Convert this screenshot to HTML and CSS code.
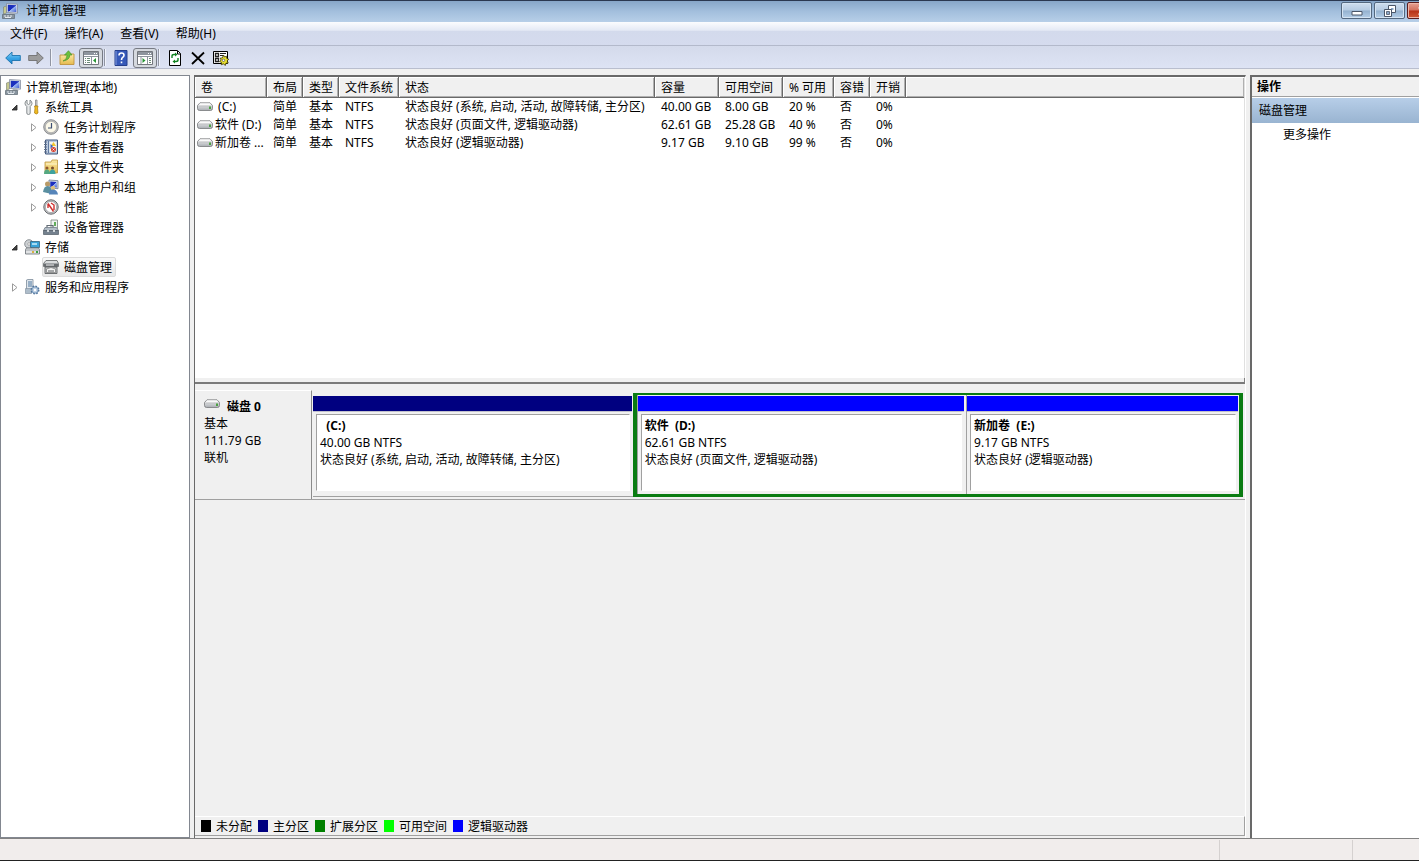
FILE: index.html
```html
<!DOCTYPE html>
<html lang="zh-CN">
<head>
<meta charset="utf-8">
<title>计算机管理</title>
<link rel="stylesheet" href="styles.css">
</head>
<body>
<svg class="defs" aria-hidden="true">
  <defs>
    <linearGradient id="g-blue" x1="0" y1="0" x2="1" y2="1"><stop offset="0" stop-color="#1a2fb8"/><stop offset=".5" stop-color="#1c2fc0"/><stop offset=".55" stop-color="#9db8f2"/><stop offset="1" stop-color="#3a55d0"/></linearGradient>
    <linearGradient id="g-arrow" x1="0" y1="0" x2="0" y2="1"><stop offset="0" stop-color="#8fd4f8"/><stop offset=".5" stop-color="#3aa5e6"/><stop offset="1" stop-color="#1f86cf"/></linearGradient>
    <linearGradient id="g-grey" x1="0" y1="0" x2="0" y2="1"><stop offset="0" stop-color="#f8f8f8"/><stop offset="1" stop-color="#a9adb2"/></linearGradient>
    <linearGradient id="g-folder" x1="0" y1="0" x2="0" y2="1"><stop offset="0" stop-color="#fbe9a4"/><stop offset="1" stop-color="#e5bb50"/></linearGradient>
    <symbol id="i-computer" viewBox="0 0 16 16">
      <path d="M1.500 4l3-1v7l-3 1z" fill="#c6c98f" stroke="#777c70" stroke-width=".6"/>
      <path d="M4.500.500l11 .700v9l-11-.800z" fill="#d8dde6" stroke="#7b8496" stroke-width=".7"/>
      <path d="M5.800 1.800l8.500.5v6.700l-8.500-.6z" fill="url(#g-blue)"/>
      <path d="M8 10h4l2 1.500H7z" fill="#aeb4bd"/>
      <path d="M.500 11.500h12v4H.500z" fill="#87939e" stroke="#5d6871" stroke-width=".7"/>
      <path d="M2 13h2M5 13h2M8 13h2M3 14.500h6" stroke="#e6ecf0"/>
    </symbol>
    <symbol id="i-tools" viewBox="0 0 16 16">
      <path d="M3 1v3.500l1.500 1L6 4.500V1q2 1 2 3.500Q8 6 6.200 7.500V14q0 1.500-1.700 1.500T2.800 14V7.500Q1 6 1 4.500 1 2 3 1z" fill="#e7e9ea" stroke="#7c8185" stroke-width=".9"/>
      <path d="M11.500 1h1.500v6h-1.500z" fill="#ddd" stroke="#777" stroke-width=".7"/>
      <path d="M10.500 7h3.500l-.5 2 .5 5q-1.700 2-3.500 0l.5-5z" fill="#f0bb22" stroke="#a97909" stroke-width=".7"/>
    </symbol>
    <symbol id="i-clock" viewBox="0 0 16 16">
      <circle cx="8" cy="8" r="7.300" fill="#bfc1c2" stroke="#77797b" stroke-width=".8"/>
      <circle cx="8" cy="8" r="5.700" fill="#fbf8e9" stroke="#999" stroke-width=".6"/>
      <path d="M8.500 4V9H5" fill="none" stroke="#3c4f73" stroke-width="1.200"/>
    </symbol>
    <symbol id="i-event" viewBox="0 0 16 16">
      <path d="M2.500 1h12v14h-12z" fill="#bac9df" stroke="#41587f"/>
      <path d="M5.500 2v12" stroke="#5f789f"/>
      <path d="M1 3h3M1 5.500h3M1 8h3M1 10.500h3M1 13h3" stroke="#61718a"/>
      <path d="M6.500 3h7v10h-7z" fill="#f4f4ec"/>
      <path d="M10.500 3l2.500 4H8z" fill="#f4c52d"/><path d="M7.500 5l2.500 2-2.500 3z" fill="#345fc1"/><circle cx="10.500" cy="10.500" r="2.500" fill="#d43c2e"/><path d="M9.500 9.500l2 2M11.500 9.500l-2 2" stroke="#fff" stroke-width=".8"/>
    </symbol>
    <symbol id="i-share" viewBox="0 0 16 16">
      <path d="M2 3h6l1-2h5.500v13H2z" fill="url(#g-folder)" stroke="#bd9540" stroke-width=".8"/>
      <path d="M3 5h11" stroke="#fff6ce"/>
      <circle cx="4" cy="9" r="1.500" fill="#8f5930"/><path d="M1 15q0-4.500 3-4.500T7 15z" fill="#55a981"/>
      <circle cx="9.500" cy="9" r="1.500" fill="#754a2b"/><path d="M6.500 15q0-4.500 3-4.500t3 4.500z" fill="#3fa29e"/>
    </symbol>
    <symbol id="i-users" viewBox="0 0 16 16">
      <path d="M6 1l9 .7v8L6 9z" fill="#d8dfe9" stroke="#6b7992" stroke-width=".8"/><path d="M7.300 2.500l6.500.5v5.500l-6.500-.5z" fill="url(#g-blue)"/>
      <circle cx="4.500" cy="5" r="2.500" fill="#b99a67"/><path d="M0 13q1-6 4.500-6t5 6l-3 1.500z" fill="#5a8fa0"/>
      <circle cx="10" cy="9" r="2.200" fill="#dec17e"/><path d="M6 15.500q0-5 4-5t5 5z" fill="#5685ba"/>
    </symbol>
    <symbol id="i-perf" viewBox="0 0 16 16">
      <circle cx="8" cy="8" r="7.200" fill="#c3c5c7" stroke="#66696d"/>
      <circle cx="8" cy="8" r="5.600" fill="#fff" stroke="#898b8f" stroke-width=".6"/>
      <path d="M5 4.500l5.500 8M5 9V5M11 11V6L8 4" fill="none" stroke="#cf302f" stroke-width="1.400"/>
    </symbol>
    <symbol id="i-device" viewBox="0 0 16 16">
      <path d="M8 1h6.500v8.500H8z" fill="#eef3f0" stroke="#78837e" stroke-width=".8"/><path d="M11 3h2v4h-2z" fill="#62ad5b"/>
      <path d="M4 8.500V6.500h6v2" fill="none" stroke="#626b74" stroke-width="1.200"/>
      <path d="M2 8.500h11.500l2 3H.500z" fill="#b3bdc7" stroke="#65717c" stroke-width=".7"/>
      <path d="M.500 11.500h15v4H.500z" fill="#74818e" stroke="#505c66" stroke-width=".7"/><path d="M4 11h2v2H4zM10 11h2v2h-2z" fill="#d3d9dd"/>
    </symbol>
    <symbol id="i-storage" viewBox="0 0 16 16">
      <circle cx="5" cy="5" r="4.300" fill="#cdd1d4" stroke="#767b80" stroke-width=".8"/><circle cx="5" cy="5" r="1.300" fill="#fff" stroke="#888" stroke-width=".6"/>
      <path d="M6.500 2.500h9v6h-9z" fill="#3aa2d7" stroke="#30627d" stroke-width=".8"/><path d="M8 4h5v2H8z" fill="#a8dcf2"/>
      <path d="M2.500 9h12l1 1.500V15h-14v-4.500z" fill="#e1e3e5" stroke="#666c72" stroke-width=".8"/><path d="M2 11h13" stroke="#9da2a6"/><path d="M12 12h2v2h-2z" fill="#39a241"/><path d="M8 12h2v2H8z" fill="#d8b244"/>
    </symbol>
    <symbol id="i-disks" viewBox="0 0 16 16">
      <path d="M3 1.500h11l1.500 3v3H.500v-3z" fill="#dadcdd" stroke="#5c5f61" stroke-width=".8"/>
      <path d="M1 4.500h14v3H1z" fill="#696d70"/><path d="M3 6h8" stroke="#f5f5f5"/>
      <path d="M2 8h12v6.500H2z" fill="#c2c5c6" stroke="#505457" stroke-width=".8"/>
      <path d="M3.500 10q4.500-3 9 0v3.500h-9z" fill="#f3f3f3" stroke="#777" stroke-width=".7"/><path d="M5 12h6" stroke="#5a5e60"/>
    </symbol>
    <symbol id="i-services" viewBox="0 0 16 16">
      <path d="M2.500 1l1.500-.500h5V12H2.500z" fill="#dfe6ed" stroke="#7c8b9a" stroke-width=".8"/><path d="M4 3h4M4 5h4M4 7h4" stroke="#51789f"/>
      <path d="M1.500 9.500h6v5h-6z" fill="#aebdca" stroke="#7c8b9a" stroke-width=".6"/>
      <circle cx="11" cy="11" r="3.700" fill="#9eb8d4" stroke="#54779e" stroke-width="1.600" stroke-dasharray="1.600 1.300"/><circle cx="11" cy="11" r="3" fill="#bdd0e3" stroke="#6d8eb3" stroke-width=".6"/><circle cx="11" cy="11" r="1.200" fill="#fff"/>
    </symbol>
    <symbol id="i-drive" viewBox="0 0 16 10">
      <path d="M3 .8h10l2.500 2.700v3q0 2-2 2h-11q-2 0-2-2v-3z" fill="url(#g-grey)" stroke="#77797b" stroke-width=".8"/>
      <path d="M3 1.500h10l1.500 2h-13z" fill="#fafafa"/><path d="M1.500 4h13" stroke="#aeb0b2" stroke-width=".6"/><path d="M12 4.500h2v2.500h-2z" fill="#4da142"/>
    </symbol>
    <symbol id="i-open" viewBox="0 0 9 9"><path d="M7 2v5H2z" fill="#404040" stroke="#222" stroke-width=".8"/></symbol>
    <symbol id="i-closed" viewBox="0 0 9 9"><path d="M2.500.8v7.400L7 4.500z" fill="#fff" stroke="#9b9b9b"/></symbol>
  </defs>
</svg>

<header class="titlebar">
  <svg class="icon"><use href="#i-computer"/></svg>
  <h1 class="title">计算机管理</h1>
  <div class="window-buttons">
    <button class="win" aria-label="最小化"><svg viewBox="0 0 12 12" width="12" height="12"><path d="M1 6.500h10v3.500H1z" fill="#fff" stroke="#4b5668"/></svg></button>
    <button class="win" aria-label="还原"><svg viewBox="0 0 12 12" width="12" height="12"><path d="M4.500.500h7v7h-7z" fill="#fff" stroke="#4b5668"/><path d="M7 3h2.500v2H7z" fill="#8aa6c6"/><path d="M.500 4.500h7v7h-7z" fill="#fff" stroke="#4b5668"/><path d="M2.500 6.500h3v3h-3z" fill="#8aa6c6" stroke="#4b5668" stroke-width=".8"/></svg></button>
    <button class="win close" aria-label="关闭"><svg viewBox="0 0 12 12" width="12" height="12"><path d="M2 2l8 8M10 2l-8 8" stroke="#fff" stroke-width="2.500"/></svg></button>
  </div>
</header>

<nav class="menubar">
  <button>文件(F)</button><button>操作(A)</button><button>查看(V)</button><button>帮助(H)</button>
</nav>

<div class="toolbar">
  <button aria-label="后退"><svg class="icon" viewBox="0 0 16 16"><path d="M.700 8L7 2v3.500h8.300v5H7V14z" fill="url(#g-arrow)" stroke="#1b73ae" stroke-width=".9"/></svg></button>
  <button aria-label="前进"><svg class="icon" viewBox="0 0 16 16"><path d="M15.300 8L9 2v3.500H.700v5H9V14z" fill="#9c9c9c" stroke="#707070" stroke-width=".9"/></svg></button>
  <span class="sep"></span>
  <button aria-label="上移"><svg class="icon" viewBox="0 0 16 16"><path d="M1 5h6l1-1h7v10.500H1z" fill="url(#g-folder)" stroke="#bf9340" stroke-width=".9"/><path d="M4 11q4-1 4-6H5.500L9.500.700 13 5h-2.200q0 5-6.800 6z" fill="#6bc03c" stroke="#3c8d25" stroke-width=".6"/></svg></button>
  <button class="pressed" aria-label="显示/隐藏控制台树"><svg class="icon" viewBox="0 0 16 16"><path d="M.500 1.500h15v13H.500z" fill="#fff" stroke="#73777d"/><path d="M1 2h14v3H1z" fill="#8d949d"/><path d="M11 3.500h1M13 3.500h1" stroke="#fff"/><path d="M8.500 7v7M1 6.500h14" stroke="#8d949d"/><path d="M2 8.500h1M4 8.500h3M2 10.500h1M4 10.500h3M2 12.500h1M4 12.500h3" stroke="#6c8b77"/><path d="M13 8v5l-3-2.500z" fill="#279535"/></svg></button>
  <span class="sep"></span>
  <button aria-label="帮助"><svg class="icon" viewBox="0 0 16 16"><path d="M2 .500h12v15H2z" fill="#3659b9" stroke="#253f8c"/><path d="M3 1v14" stroke="#829cdc"/><path d="M6 5.500q0-2.500 2.500-2.500t2.500 2.200q0 1.300-1.300 2.200-1.200.8-1.200 2.600M8.500 11.500v1.700" fill="none" stroke="#fff" stroke-width="1.600"/></svg></button>
  <button class="pressed" aria-label="显示/隐藏操作窗格"><svg class="icon" viewBox="0 0 16 16"><path d="M.500 1.500h15v13H.500z" fill="#fff" stroke="#73777d"/><path d="M1 2h14v3H1z" fill="#8d949d"/><path d="M11 3.500h1M13 3.500h1" stroke="#fff"/><path d="M10.500 7v7M1 6.500h14M4 7v7" stroke="#8d949d"/><path d="M12 8.500h2M12 10.500h2M12 12.500h2" stroke="#6c8b77"/><path d="M5.500 8v5l3-2.500z" fill="#279535"/></svg></button>
  <span class="sep"></span>
  <button aria-label="刷新"><svg class="icon" viewBox="0 0 16 16"><path d="M2.500.500h8l3 3v12h-11z" fill="#fff" stroke="#000"/><path d="M10.500 1v3h3" fill="none" stroke="#000"/><path d="M5 8V6q0-1.500 2-1.500H9M11 8v2q0 1.500-2 1.500H7" fill="none" stroke="#118322" stroke-width="1.400"/><path d="M8 2.500v4l2.500-2zM8 9.500v4l-2.500-2z" fill="#118322"/></svg></button>
  <button aria-label="删除"><svg class="icon" viewBox="0 0 16 16"><path d="M2 2.500l12 11.500M14 2.500L2 14" stroke="#000" stroke-width="1.800"/></svg></button>
  <button aria-label="属性"><svg class="icon" viewBox="0 0 16 16"><path d="M.500 1.500h14v12H.500z" fill="#fff" stroke="#000"/><path d="M2.500 3.500h3v3h-3zM2.500 8.500h3v3h-3z" fill="none" stroke="#222" stroke-width="1.300"/><path d="M7 3.500h6M7 5.500h3" stroke="#222"/><path d="M10.500 5l1 2 2-.8.2 2.200 2 .8-1.500 1.700 1 2.100-2.200.2-.8 2.300-1.700-1.700-2.200 1 .2-2.400-2-.8 1.600-1.500-.9-2 2.200-.2z" fill="#e8df2e" stroke="#3a3500" stroke-width=".8"/><circle cx="10.500" cy="10.300" r="1.200" fill="#fff" stroke="#333" stroke-width=".6"/></svg></button>
</div>

<main class="workspace">
  <nav class="pane tree" aria-label="控制台树">
    <ul>
      <li><div class="node root"><svg class="icon"><use href="#i-computer"/></svg><span>计算机管理(本地)</span></div>
        <ul>
          <li><div class="node"><svg class="twist"><use href="#i-open"/></svg><svg class="icon"><use href="#i-tools"/></svg><span>系统工具</span></div>
            <ul class="sub">
              <li><div class="node"><svg class="twist"><use href="#i-closed"/></svg><svg class="icon"><use href="#i-clock"/></svg><span>任务计划程序</span></div></li>
              <li><div class="node"><svg class="twist"><use href="#i-closed"/></svg><svg class="icon"><use href="#i-event"/></svg><span>事件查看器</span></div></li>
              <li><div class="node"><svg class="twist"><use href="#i-closed"/></svg><svg class="icon"><use href="#i-share"/></svg><span>共享文件夹</span></div></li>
              <li><div class="node"><svg class="twist"><use href="#i-closed"/></svg><svg class="icon"><use href="#i-users"/></svg><span>本地用户和组</span></div></li>
              <li><div class="node"><svg class="twist"><use href="#i-closed"/></svg><svg class="icon"><use href="#i-perf"/></svg><span>性能</span></div></li>
              <li><div class="node leaf"><svg class="icon"><use href="#i-device"/></svg><span>设备管理器</span></div></li>
            </ul>
          </li>
          <li><div class="node"><svg class="twist"><use href="#i-open"/></svg><svg class="icon"><use href="#i-storage"/></svg><span>存储</span></div>
            <ul class="sub">
              <li><div class="node leaf"><span class="selected"><svg class="icon"><use href="#i-disks"/></svg><span>磁盘管理</span></span></div></li>
            </ul>
          </li>
          <li><div class="node"><svg class="twist"><use href="#i-closed"/></svg><svg class="icon"><use href="#i-services"/></svg><span>服务和应用程序</span></div></li>
        </ul>
      </li>
    </ul>
  </nav>

  <section class="pane center">
    <div class="volumes">
      <table>
        <colgroup><col class="w72"><col class="w36"><col class="w36"><col class="w60"><col class="w256"><col class="w64"><col class="w64"><col class="w51"><col class="w36"><col class="w36"><col></colgroup>
        <thead><tr><th>卷</th><th>布局</th><th>类型</th><th>文件系统</th><th>状态</th><th>容量</th><th>可用空间</th><th>% 可用</th><th>容错</th><th>开销</th><th></th></tr></thead>
        <tbody>
          <tr><td class="name"><svg class="drive"><use href="#i-drive"/></svg>&nbsp;(C:)</td><td>简单</td><td>基本</td><td>NTFS</td><td>状态良好 (系统, 启动, 活动, 故障转储, 主分区)</td><td>40.00 GB</td><td>8.00 GB</td><td>20 %</td><td>否</td><td>0%</td><td></td></tr>
          <tr><td class="name"><svg class="drive"><use href="#i-drive"/></svg>软件 (D:)</td><td>简单</td><td>基本</td><td>NTFS</td><td>状态良好 (页面文件, 逻辑驱动器)</td><td>62.61 GB</td><td>25.28 GB</td><td>40 %</td><td>否</td><td>0%</td><td></td></tr>
          <tr><td class="name"><svg class="drive"><use href="#i-drive"/></svg>新加卷 ...</td><td>简单</td><td>基本</td><td>NTFS</td><td>状态良好 (逻辑驱动器)</td><td>9.17 GB</td><td>9.10 GB</td><td>99 %</td><td>否</td><td>0%</td><td></td></tr>
        </tbody>
      </table>
    </div>
    <div class="splitter"></div>
    <div class="graph">
      <div class="disk">
        <div class="disk-label">
          <h2><svg class="drive"><use href="#i-drive"/></svg>磁盘 0</h2>
          <p>基本</p><p>111.79 GB</p><p>联机</p>
        </div>
        <div class="parts">
          <article class="part primary">
            <div class="stripe"></div>
            <div class="info"><h3>&nbsp; (C:)</h3><p>40.00 GB NTFS</p><p>状态良好 (系统, 启动, 活动, 故障转储, 主分区)</p></div>
          </article>
          <div class="extended">
            <article class="part logical large">
              <div class="stripe"></div>
              <div class="info"><h3>软件&nbsp; (D:)</h3><p>62.61 GB NTFS</p><p>状态良好 (页面文件, 逻辑驱动器)</p></div>
            </article>
            <article class="part logical small">
              <div class="stripe"></div>
              <div class="info"><h3>新加卷&nbsp; (E:)</h3><p>9.17 GB NTFS</p><p>状态良好 (逻辑驱动器)</p></div>
            </article>
          </div>
        </div>
      </div>
    </div>
    <ul class="legend">
      <li><i class="black"></i>未分配</li><li><i class="navy"></i>主分区</li><li><i class="green"></i>扩展分区</li><li><i class="lime"></i>可用空间</li><li><i class="blue"></i>逻辑驱动器</li>
    </ul>
  </section>

  <aside class="pane actions">
    <h2>操作</h2>
    <h3>磁盘管理</h3>
    <button>更多操作</button>
  </aside>
</main>

<footer class="statusbar"><span></span><span></span><span></span></footer>
</body>
</html>
```

FILE: styles.css
```css
* { box-sizing: border-box; }

body {
  margin: 0;
  height: 100vh;
  display: flex;
  flex-direction: column;
  overflow: hidden;
  background: #f0f0f0;
  color: #000;
  font: 12px/17px "Noto Sans", "Noto Sans CJK SC", sans-serif;
}

h1, h2, h3, p, ul { margin: 0; padding: 0; font-size: 12px; }
ul { list-style: none; }
svg { display: block; flex: none; }
button {
  margin: 0;
  padding: 0;
  border: 0;
  background: none;
  color: inherit;
  font: inherit;
}
.defs { position: absolute; width: 0; height: 0; }
.icon { width: 16px; height: 16px; }
.drive { width: 16px; height: 10px; }

/* Window frame */
.titlebar {
  display: flex;
  flex: none;
  align-items: center;
  gap: 8px;
  height: 22px;
  padding: 0 0 2px 2px;
  border-top: 1px solid #2b3850;
  background: linear-gradient(#87a6c8, #a3bfdd 50%, #b7cfe8);
}
.title { flex: 1; font-weight: normal; }
.window-buttons {
  display: flex;
  gap: 2px;
  width: 78px;
  height: 17px;
  overflow: hidden;
}
.win {
  display: flex;
  flex: none;
  align-items: center;
  justify-content: center;
  width: 31px;
  height: 17px;
  border: 1px solid #54687f;
  border-radius: 2px;
  background: linear-gradient(#cfdeee, #b5cbe2 48%, #94b1cf 52%, #b4cee7);
  box-shadow: inset 0 0 0 1px #d5e4f3;
}
.close {
  width: 31px;
  border-color: #5c1d1d;
  background: linear-gradient(#e6a193, #d3705c 48%, #b63116 52%, #cf5a36);
  box-shadow: inset 0 0 0 1px #edb6a8;
}

.menubar {
  display: flex;
  flex: none;
  gap: 17px;
  height: 24px;
  padding: 0 10px;
  border-bottom: 1px solid #b3b9cb;
  background: linear-gradient(#fbfcfe, #e4e9f5 36%, #d3daec 40%, #d5dbee);
}

.toolbar {
  display: flex;
  flex: none;
  align-items: center;
  height: 23px;
  padding: 1px 0 0 1px;
  border-bottom: 1px solid #b9bece;
  background: linear-gradient(#d4daeb, #dde3f4);
}
.toolbar button {
  display: flex;
  align-items: center;
  justify-content: center;
  width: 23px;
  height: 20px;
}
.toolbar .pressed {
  width: 24px;
  margin-left: 1px;
  border: 1px solid #777b84;
  border-radius: 3px;
  background: #d5d9df;
}
.sep {
  width: 2px;
  height: 17px;
  margin: 0 3px;
  border-left: 1px solid #9095a3;
  border-right: 1px solid #f0f3fb;
}
.pressed + .sep { margin-left: 1px; }

/* Three panes */
.workspace {
  display: grid;
  flex: 1;
  grid-template-columns: 190px minmax(0, 1fr) 169px;
  gap: 4px;
  min-height: 0;
  padding-top: 6px;
}
.pane {
  min-width: 0;
  border: 1px solid #828790;
  background: #fff;
}

.tree { padding-top: 1px; }
.node {
  display: flex;
  align-items: center;
  gap: 5px;
  height: 20px;
  padding-left: 9px;
  white-space: nowrap;
}
.root { padding-left: 4px; }
.sub .node { padding-left: 28px; }
.sub .leaf { padding-left: 42px; }
.twist { width: 9px; height: 9px; }
.selected {
  display: flex;
  align-items: center;
  gap: 5px;
  height: 20px;
  margin-left: -1px;
  padding-right: 3px;
  border: 1px solid #dcdcdc;
  border-radius: 2px;
  background: linear-gradient(#f9f9f9, #e8e8e8);
}

.center {
  display: flex;
  flex-direction: column;
  padding-bottom: 2px;
  border-width: 2px 0 0 1px;
  border-color: #696969;
  border-right: 1px solid #fff;
  background: #f0f0f0;
}
.volumes { flex: none; height: 301px; background: #fff; border-right: 1px solid #e0e0e0; }
table { width: 100%; table-layout: fixed; border-collapse: separate; border-spacing: 0; }
.w36 { width: 36px; }
.w51 { width: 51px; }
.w60 { width: 60px; }
.w64 { width: 64px; }
.w72 { width: 72px; }
.w256 { width: 256px; }
th, td {
  padding: 0 0 0 6px;
  overflow: hidden;
  text-align: left;
  font-weight: normal;
  white-space: nowrap;
}
th {
  height: 21px;
  padding-top: 1px;
  border-right: 1px solid #696969;
  border-bottom: 1px solid #696969;
  background: #f0f0f0;
  box-shadow: inset 1px 1px #fff, inset -1px -1px #b0b0b0;
}
th:last-child { border-right: 0; }
td { height: 18px; line-height: 18px; }
.name { padding-left: 2px; }
.name .drive { display: inline-block; margin: 0 2px 0 0; vertical-align: -1px; }

.splitter {
  flex: none;
  height: 6px;
  border-right: 1px solid #808080;
  border-bottom: 2px solid #7a7a7a;
  background: #f0f0f0;
}
.graph { flex: 1; min-height: 0; padding-top: 6px; }
.disk { display: flex; height: 110px; border-bottom: 1px solid #a0a0a0; }
.disk-label {
  flex: none;
  width: 117px;
  padding: 7px 9px;
  border-top: 1px solid #fff;
  border-right: 1px solid #8a8a8a;
}
.disk-label h2 { display: flex; gap: 7px; }
.disk-label .drive { margin-top: 1px; }
.parts { display: flex; flex: 1; min-width: 0; padding: 3px 2px 2px 1px; }
.part { display: flex; flex-direction: column; min-width: 0; }
.primary { flex: 319 1 0; padding: 3px 1px 3px 0; border-bottom: 1px solid #a0a0a0; }
.extended {
  display: flex;
  flex: 603 1 0;
  gap: 1px;
  min-width: 0;
  border: solid #0a7c12;
  border-width: 2px 4px 3px;
}
.large { flex: 329 1 0; }
.small { flex: 273 1 0; }
.logical { padding: 1px 1px 1px 0; border-left: 1px solid #a0a0a0; }
.stripe { flex: none; height: 16px; border-bottom: 1px solid #c0c0cc; background: #00f; }
.primary .stripe { background: #000080; }
.info {
  flex: 1;
  margin: 2px 2px 2px 3px;
  padding: 2px 3px 0;
  border: 1px solid #a0a0a0;
  border-right-color: #fff;
  border-bottom-color: #fff;
  background: #fff;
  overflow: hidden;
  white-space: nowrap;
}

.legend {
  display: flex;
  flex: none;
  gap: 6px;
  height: 20px;
  padding-left: 6px;
  border-top: 1px solid #fff;
  border-right: 1px solid #a0a0a0;
  border-bottom: 1px solid #a0a0a0;
}
.legend li { display: flex; align-items: center; gap: 5px; }
.legend i { width: 10px; height: 12px; }
.black { background: #000; }
.navy { background: #000080; }
.green { background: #008000; }
.lime { background: #0f0; }
.blue { background: #00f; }

.actions {
  display: flex;
  flex-direction: column;
  border-width: 2px 0 0 2px;
  border-color: #696969;
}
.actions h2 {
  height: 20px;
  padding-left: 5px;
  border-bottom: 1px solid #a0a0a0;
  background: #f0f0f0;
  line-height: 20px;
}
.actions h3 {
  height: 26px;
  padding-left: 7px;
  border-top: 1px solid #fff;
  background: linear-gradient(#b7cee8, #99b4d1);
  font-weight: normal;
  line-height: 25px;
}
.actions button { height: 22px; padding-left: 31px; text-align: left; }

.statusbar {
  display: grid;
  flex: none;
  grid-template-columns: minmax(0, 1fr) 133px 67px;
  height: 23px;
  padding-top: 1px;
  border-top: 1px solid #828282;
  border-bottom: 1px solid #222;
  background: #f1edec;
}
.statusbar span + span { border-left: 1px solid #d5d1d0; }
```
